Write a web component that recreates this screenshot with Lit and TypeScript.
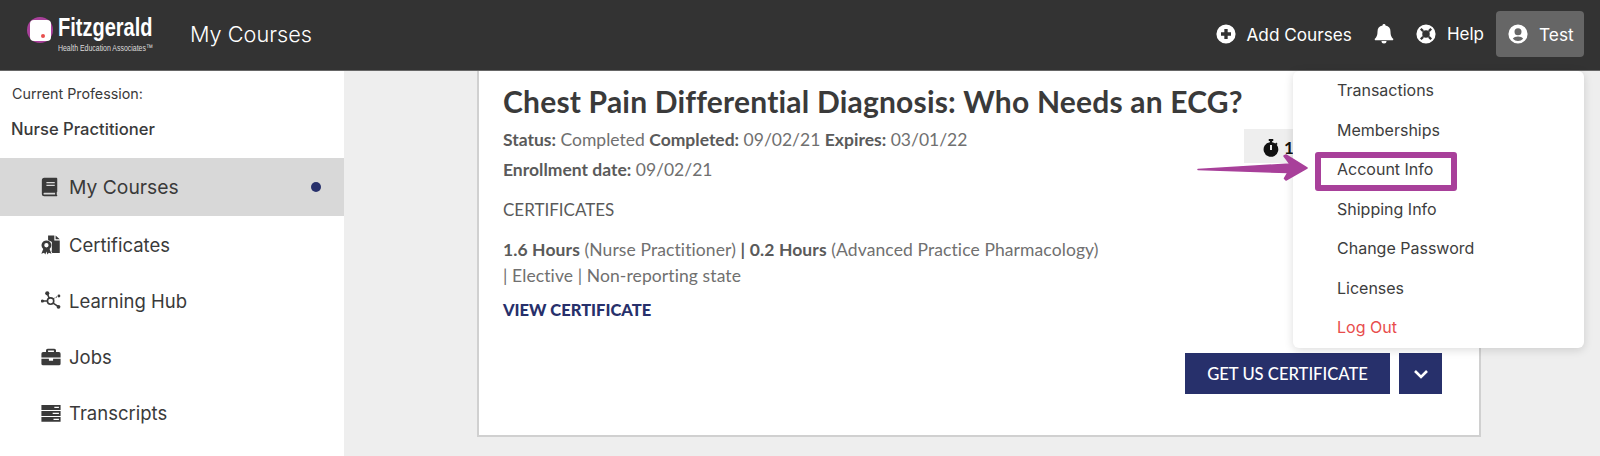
import { LitElement, html, css, svg } from "lit";
import { customElement } from "lit/decorators.js";

const book = svg`<path d="M4 1h13.500A1.500 1.500 0 0 1 19.500 2.500v15a1 1 0 0 1-.6.9v2.800a.8.8 0 0 1 .6.8v.5a.5.5 0 0 1-.5.5H4a3 3 0 0 1-3-3V4a3 3 0 0 1 3-3zm2.500 5v1.600h10V6zm0 3.200v1.600h10V9.200zM4 19a1 1 0 0 0 0 2h12.900v-2z"/>`;
const cert = svg`<path d="M8.500.5h7.500V6.500h6.500V21.500H13.500l-1-2.300 .5-.5V8.500a8 8 0 0 0-4.500-2.300zM17.500.5l5 4.500h-5z"/><path fill-rule="evenodd" d="M6.500 6.500a5.800 5.800 0 0 1 3.800 10.200l2.300 5.800-3.300-1.300L7.800 23.500 6.500 19.800 5.200 23.500 3.700 21.200.4 22.500l2.300-5.800A5.800 5.800 0 0 1 6.500 6.500zm0 3.200a2.600 2.600 0 1 0 0 5.200 2.600 2.600 0 0 0 0-5.200z"/>`;
const hub = svg`<g stroke="currentColor" stroke-width="1.900" fill="none"><circle cx="11.500" cy="12" r="3.800"/><path d="M7.500 3 10 9M14.500 14.500l6 4M2 12h6"/></g><path stroke="currentColor" stroke-width="1.200" stroke-dasharray="2 1.500" fill="none" d="M14.500 9.500 20 6.500"/><circle cx="7.500" cy="2.800" r="2.500"/><circle cx="21" cy="19" r="2.300"/><circle cx="1.800" cy="12" r="1.900"/><circle cx="21.500" cy="6" r="1.700"/>`;
const jobs = svg`<path fill-rule="evenodd" d="M8 2h8a2 2 0 0 1 2 2v2h3.500a2 2 0 0 1 2 2v4.500H.5V8a2 2 0 0 1 2-2H6V4a2 2 0 0 1 2-2zm.5 2.200V6h7V4.200z"/><path d="M.5 14h9v2.500h5V14h9v6a2 2 0 0 1-2 2h-19a2 2 0 0 1-2-2z"/>`;
const transcripts = svg`<path fill-rule="evenodd" d="M.5 2.500h23v5.800H.5zM16 4.500v1.500h5.500V4.500zM.5 9.700h23v5.800H.5zM14 11.800v1.500h7.500v-1.500zM.5 16.900h23v5.600H.5zM15 19v1.500h6.500V19z"/>`;
const plus = svg`<path fill-rule="evenodd" d="M12 .5a11.500 11.500 0 1 1 0 23 11.500 11.500 0 0 1 0-23zm-2 5.500V10H6v4h4v4h4v-4h4v-4h-4V6z"/>`;
const bell = svg`<path d="M12 0a1.800 1.800 0 0 1 1.800 1.900 7.500 7.500 0 0 1 6 7.400c0 6 2.700 7.800 3.200 8.400.5.600 0 1.800-1 1.800H2c-1 0-1.500-1.200-1-1.800.5-.6 3.200-2.400 3.200-8.400a7.500 7.500 0 0 1 6-7.400A1.800 1.800 0 0 1 12 0zM9 20.500h6a3 3 0 0 1-6 0z"/>`;
const ring = svg`<path fill-rule="evenodd" d="M12 .5a11.500 11.500 0 1 1 0 23 11.500 11.500 0 0 1 0-23zm0 7a4.500 4.500 0 1 0 0 9 4.500 4.500 0 0 0 0-9zM4.800 6.700 6.700 4.800 9.500 7.600 7.600 9.500zM17.300 4.800 19.200 6.700 16.400 9.500 14.500 7.600zM19.200 17.300 17.300 19.200 14.500 16.400 16.400 14.500zM6.700 19.200 4.800 17.300 7.600 14.500 9.500 16.400z"/>`;
const user = svg`<path fill-rule="evenodd" d="M12 .5a11.500 11.500 0 1 1 0 23 11.500 11.500 0 0 1 0-23zm0 4.500a4.200 4.200 0 1 0 0 8.400 4.200 4.200 0 0 0 0-8.400zm0 10c-2.800 0-5 1-6.200 2.700a8.500 8.500 0 0 0 12.400 0C17 16 14.800 15 12 15z"/>`;
const watch = svg`<path fill-rule="evenodd" d="M9 0h6v2.500h-1.500v1.700a9.500 9.500 0 0 1 4.300 1.800l1.200-1.200 1.800 1.800-1.200 1.200A9.800 9.800 0 1 1 10.500 4.200V2.500H9zm1.700 8v6.500h2.600V8z"/>`;

const icon = (body: unknown) => html`<svg viewBox="0 0 24 24" fill="currentColor" aria-hidden="true">${body}</svg>`;

const NAV = [
  { label: "Certificates", icon: cert },
  { label: "Learning Hub", icon: hub },
  { label: "Jobs", icon: jobs },
  { label: "Transcripts", icon: transcripts },
];

const MENU = ["Transactions", "Memberships", "Account Info", "Shipping Info", "Change Password", "Licenses"];

@customElement("app-root")
export class AppRoot extends LitElement {
  static styles = css`
    :host {
      display: block;
      position: relative;
      width: 1600px;
      height: 456px;
      overflow: hidden;
      background: #eeeeee;
      font-family: Inter, "Liberation Sans", sans-serif;
      color: #3a3a3a;
    }
    svg { display: block; }

    .top {
      height: 71px;
      box-sizing: border-box;
      background: #333333;
      border-bottom: 1px solid #666;
      display: flex;
      align-items: center;
      color: #fff;
      padding: 0 16px 2px 27px;
    }
    .logo { display: flex; align-items: center; gap: 5px; width: 163px; }
    .mark {
      width: 26px; height: 26px; border-radius: 50%;
      background: #a8409a;
      display: flex; align-items: center; justify-content: center;
      position: relative;
      flex: none;
      margin-top: -8px;
    }
    .mark i {
      width: 21px; height: 21px; background: #fff; border-radius: 4px; display: block;
    }
    .mark b {
      position: absolute; left: 14px; top: 17px; width: 4px; height: 4px;
      border-radius: 50%; background: #e8504f;
    }
    .wordmark { display: flex; flex-direction: column; width: 100px; font-family: "Liberation Sans", sans-serif; }
    .wordmark strong {
      font-size: 25px; line-height: 26px; font-weight: 700;
      transform: scaleX(0.8); transform-origin: left center; white-space: nowrap;
    }
    .wordmark span {
      font-size: 9.500px; line-height: 12px; margin-top: 2px; color: #ddd; white-space: nowrap;
      transform: scaleX(0.73); transform-origin: left center;
    }
    .page { font-size: 21.700px; font-weight: 300; }
    .spacer { flex: 1; }
    .act { display: flex; align-items: center; font-size: 17px; font-weight: 400; }
    .act svg { width: 20px; height: 20px; }
    .add { gap: 11px; margin-right: 22px; font-size: 17.200px; }
    .bell { margin-right: 22px; }
    .help { gap: 11px; margin-right: 12px; }
    .acct {
      width: 88px; height: 46px; box-sizing: border-box; background: #666666; border-radius: 4px;
      gap: 11px; padding-left: 12px; font-size: 17.300px;
    }

    .body { display: flex; height: 385px; }
    .side { width: 344px; flex: none; background: #fff; }
    .cur { font-size: 14.300px; line-height: 18px; padding: 14px 12px 0; }
    .prof { font-size: 16.600px; line-height: 20px; font-weight: 500; padding: 16px 12px 0 11px; margin-bottom: 19px; }
    .nav {
      height: 56px; display: flex; align-items: center; gap: 8px; padding-left: 41px;
      font-size: 18.500px;
    }
    .nav svg { width: 20px; height: 20px; flex: none; }
    .nav.active { height: 58px; background: #d8d8d8; position: relative; font-size: 19.300px; margin-bottom: 1px; }
    .dot { width: 10px; height: 10px; border-radius: 50%; background: #27306b; margin-left: auto; margin-right: 23px; }

    .main { flex: 1; padding: 0 119px 19px 133px; display: flex; }
    .card {
      flex: 1;
      box-sizing: border-box;
      background: #fff;
      border: 2px solid #d0d0d0;
      border-top: none;
      padding: 0 24px 0 24px;
      font-family: Lato, "Open Sans", sans-serif;
      position: relative;
      display: flex; flex-direction: column;
    }
    h1 {
      margin: 12px 0 0; font-size: 30px; line-height: 36px; font-weight: 700; color: #3a3a3a;
      font-family: Lato, sans-serif; letter-spacing: 0.2px;
    }
    .line { font-size: 17.500px; line-height: 24px; color: #707070; }
    .line b { font-weight: 700; color: #5a5a5a; }
    .l1 { margin-top: 9px; }
    .l2 { margin-top: 6px; }
    .heading { font-size: 17px; line-height: 24px; color: #5a5a5a; margin-top: 16px; }
    .hours { font-size: 17.500px; line-height: 26px; letter-spacing: 0.1px; color: #707070; margin-top: 15px; }
    .hours b { color: #5a5a5a; font-weight: 700; }
    .view { font-size: 16.500px; line-height: 22px; font-weight: 900; color: #27306b; margin-top: 10px; }
    .btns { display: flex; justify-content: flex-end; gap: 9px; margin-top: 32px; margin-right: 13px; }
    .btn {
      height: 41px; background: #27306b; color: #fff; display: flex; align-items: center; justify-content: center;
      font-size: 16.600px; font-weight: 500; border: none; padding: 0; font-family: inherit;
    }
    .primary { width: 205px; }
    .chev { width: 43px; }
    .chev svg { width: 16px; height: 16px; }
    .timer {
      position: absolute; left: 765px; top: 58px; width: 120px; height: 34px;
      background: #eeeeee; color: #111; font-size: 17px; font-weight: 700;
      display: flex; align-items: center; gap: 4px; padding: 3px 0 0 18px; box-sizing: border-box;
    }
    .timer svg { width: 18px; height: 18px; }

    .menu {
      position: absolute; left: 1293px; top: 71px; width: 291px; height: 277px;
      box-sizing: border-box;
      background: #fff; border-radius: 6px;
      box-shadow: 0 2px 10px rgba(0, 0, 0, 0.14);
      padding: 0 0 0 44px;
      display: flex; flex-direction: column;
      font-size: 16px; color: #3d3d3d;
    }
    .menu div { height: 39.500px; line-height: 39.500px; flex: none; }
    .menu .out { color: #e84c4c; }
    .hl {
      position: absolute; left: 1315px; top: 152px; width: 142px; height: 39px; box-sizing: border-box;
      border: 6px solid #a8409a; border-radius: 3px;
    }
    .arrow { position: absolute; left: 1190px; top: 145px; width: 125px; height: 46px; }
  `;

  render() {
    return html`
      <header class="top">
        <div class="logo">
          <div class="mark"><i></i><b></b></div>
          <div class="wordmark"><strong>Fitzgerald</strong><span>Health Education Associates™</span></div>
        </div>
        <div class="page">My Courses</div>
        <div class="spacer"></div>
        <div class="act add">${icon(plus)}<span>Add Courses</span></div>
        <div class="act bell">${icon(bell)}</div>
        <div class="act help">${icon(ring)}<span>Help</span></div>
        <div class="act acct">${icon(user)}<span>Test</span></div>
      </header>
      <div class="body">
        <aside class="side">
          <div class="cur">Current Profession:</div>
          <div class="prof">Nurse Practitioner</div>
          <div class="nav active">${icon(book)}<span>My Courses</span><span class="dot"></span></div>
          ${NAV.map((n) => html`<div class="nav">${icon(n.icon)}<span>${n.label}</span></div>`)}
        </aside>
        <main class="main">
          <article class="card">
            <h1>Chest Pain Differential Diagnosis: Who Needs an ECG?</h1>
            <div class="line l1"><b>Status:</b> Completed <b>Completed:</b> 09/02/21 <b>Expires:</b> 03/01/22</div>
            <div class="line l2"><b>Enrollment date:</b> 09/02/21</div>
            <div class="heading">CERTIFICATES</div>
            <div class="hours"><b>1.6 Hours</b> (Nurse Practitioner) <b>|</b> <b>0.2 Hours</b> (Advanced Practice Pharmacology)<br />| Elective | Non-reporting state</div>
            <div class="view">VIEW CERTIFICATE</div>
            <div class="btns">
              <button class="btn primary">GET US CERTIFICATE</button>
              <button class="btn chev">
                <svg viewBox="0 0 16 16" fill="none" stroke="currentColor" stroke-width="2.600"><path d="M2 5l6 6 6-6" /></svg>
              </button>
            </div>
            <div class="timer">${icon(watch)}<span>1.6 Hours</span></div>
          </article>
        </main>
      </div>
      <nav class="menu">
        ${MENU.map((m) => html`<div>${m}</div>`)}
        <div class="out">Log Out</div>
      </nav>
      <div class="hl"></div>
      <svg class="arrow" viewBox="0 0 125 46" fill="#a8409a" stroke="#a8409a" stroke-width="1.500" stroke-linejoin="round">
        <path d="M8 24.500 100 19 94 11 96 10 117 23 96 35 94.500 33.500 98 27.500z" />
      </svg>
    `;
  }
}
